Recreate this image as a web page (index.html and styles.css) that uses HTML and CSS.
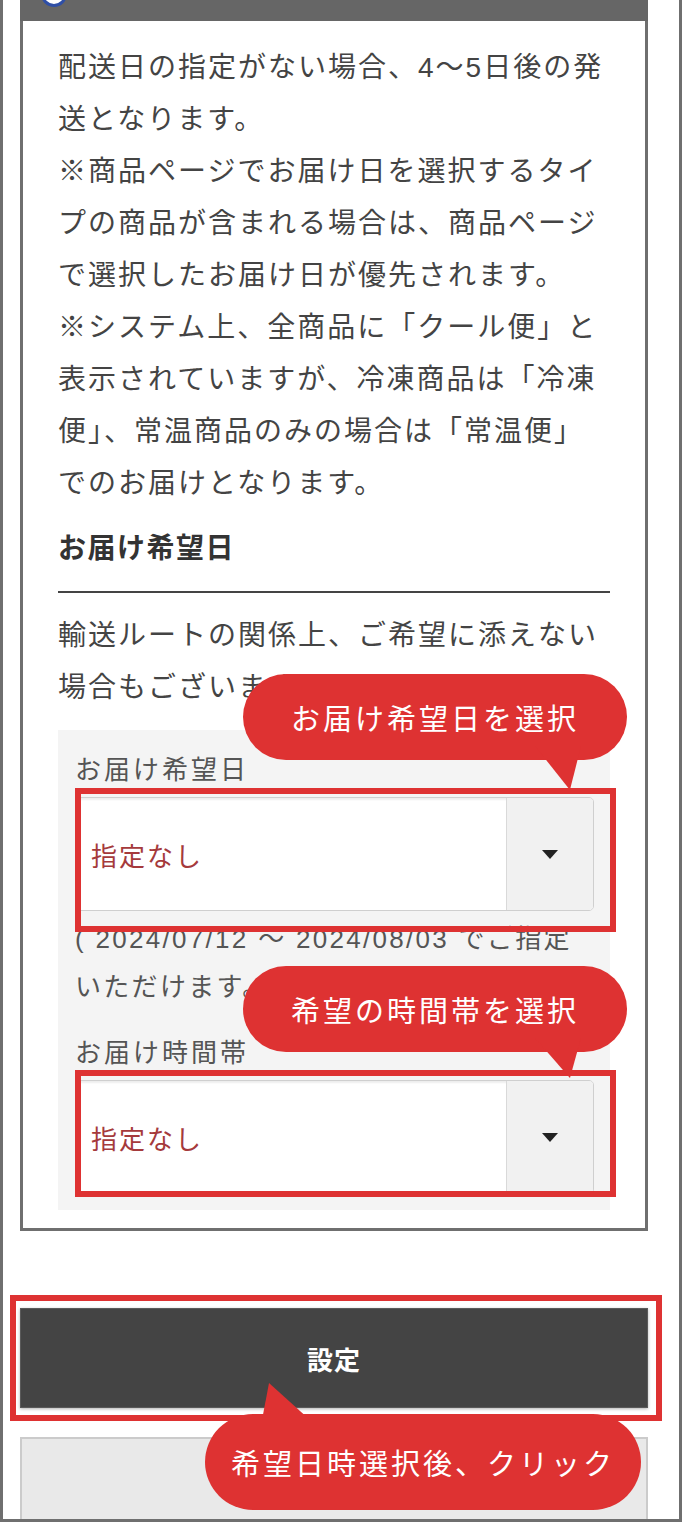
FILE: index.html
```html
<!DOCTYPE html>
<html>

<head>
    <title>お届け日時の指定</title>
    <link rel="stylesheet" href="styles.css">
</head>

<body>
    <div class="frame">
        <div class="panel">
            <div class="panel-head"><span class="head-icon"></span></div>
            <div class="panel-body">
                <p class="lead">配送日の指定がない場合、4〜5日後の発<br>送となります。<br>※商品ページでお届け日を選択するタイ<br>プの商品が含まれる場合は、商品ページ<br>で選択したお届け日が優先されます。<br>※システム上、全商品に「クール便」と<br>表示されていますが、冷凍商品は「冷凍<br>便」、常温商品のみの場合は「常温便」<br>でのお届けとなります。</p>

                <h2 class="section-title">お届け希望日</h2>
                <p class="note">輸送ルートの関係上、ご希望に添えない<br>場合もございます。</p>

                <div class="date-box">
                    <div class="field-label">お届け希望日</div>
                    <div class="select">
                        <span class="select-value">指定なし</span>
                        <span class="select-arrow"></span>
                    </div>
                    <p class="hint">( 2024/07/12 〜 2024/08/03 でご指定<br>いただけます。</p>

                    <div class="field-label second">お届け時間帯</div>
                    <div class="select">
                        <span class="select-value">指定なし</span>
                        <span class="select-arrow"></span>
                    </div>
                </div>
            </div>
        </div>

        <button class="btn-set">設定</button>
        <button class="btn-back"></button>

        <!-- annotation frames and callouts -->
        <div class="mark mark-date"></div>
        <div class="mark mark-time"></div>
        <div class="mark mark-set"></div>

        <div class="bubble bubble-date">お届け希望日を選択</div>
        <div class="bubble bubble-time">希望の時間帯を選択</div>
        <div class="bubble bubble-set">希望日時選択後、クリック</div>
    </div>
</body>

</html>
```

FILE: styles.css
```css
html,
body {
    margin: 0;
    padding: 0;
    background-color: #fff;
}

body {
    font-family: "Liberation Sans", "Noto Sans CJK JP", sans-serif;
    color: #444;
}

.frame {
    position: relative;
    width: 682px;
    height: 1522px;
    box-sizing: border-box;
    border: 3px solid #6f6f6f;
    border-top: none;
    overflow: hidden;
    background-color: #fff;
    padding-left: 17px;
}

/* panel */
.panel {
    width: 628px;
}

.panel-head {
    position: relative;
    height: 21px;
    background-color: #666;
    overflow: hidden;
}

.head-icon {
    position: absolute;
    left: 21px;
    top: -19px;
    width: 20px;
    height: 20px;
    border: 3px solid #2f4fa6;
    border-radius: 50%;
    background-color: #fff;
}

.panel-body {
    border: 3px solid #6f6f6f;
    border-top: none;
    padding: 21px 35px 18px 35px;
}

.lead {
    margin: 0;
    font-size: 28px;
    line-height: 52px;
    letter-spacing: 2px;
    white-space: nowrap;
}

.section-title {
    margin: 13px 0 0 0;
    padding-bottom: 16px;
    border-bottom: 2px solid #444;
    font-size: 28px;
    line-height: 52px;
    letter-spacing: 1.5px;
    font-weight: bold;
    color: #333;
}

.note {
    margin: 17px 0 0 0;
    font-size: 28px;
    line-height: 52px;
    letter-spacing: 2px;
    white-space: nowrap;
}

/* date / time selection */
.date-box {
    margin-top: 16px;
    background-color: #f4f4f4;
    padding: 20px 16px 16px 17px;
}

.field-label {
    font-size: 26px;
    line-height: 40px;
    letter-spacing: 3px;
    color: #555;
    margin-bottom: 7px;
}

.field-label.second {
    margin-top: 22px;
}

.select {
    display: flex;
    height: 114px;
    box-sizing: border-box;
    border: 1px solid #cfcfcf;
    border-radius: 5px;
    background-color: #fff;
    box-shadow: inset 0 2px 2px rgba(0, 0, 0, 0.07);
    overflow: hidden;
}

.select-value {
    flex: 1;
    display: flex;
    align-items: center;
    padding-left: 15px;
    font-size: 26px;
    letter-spacing: 2px;
    color: #a53a3c;
}

.select-arrow {
    width: 86px;
    display: flex;
    align-items: center;
    justify-content: center;
    background-color: #f1f1f1;
    border-left: 1px solid #d9d9d9;
}

.select-arrow::after {
    content: "";
    width: 0;
    height: 0;
    border-left: 8px solid transparent;
    border-right: 8px solid transparent;
    border-top: 9px solid #222;
}

.hint {
    margin: 4px 0 0 0;
    font-size: 26px;
    line-height: 48px;
    letter-spacing: 2.3px;
    color: #555;
    white-space: nowrap;
}

/* buttons */
.btn-set,
.btn-back {
    display: block;
    width: 628px;
    font-family: "Liberation Sans", "Noto Sans CJK JP", sans-serif;
}

.btn-set {
    margin-top: 77px;
    height: 100px;
    background-color: #444;
    border: 1px solid #5a5a5a;
    box-shadow: 0 1px 3px rgba(0, 0, 0, 0.3);
    color: #fff;
    font-size: 26px;
    font-weight: bold;
    letter-spacing: 1px;
}

.btn-back {
    margin-top: 29px;
    height: 110px;
    background-color: #e9e9e9;
    border: 2px solid #cbcbcb;
}

/* red annotation frames */
.mark {
    position: absolute;
    border: 6px solid #de3232;
    box-sizing: border-box;
}

.mark-date {
    left: 72px;
    top: 788px;
    width: 541px;
    height: 144px;
}

.mark-time {
    left: 72px;
    top: 1070px;
    width: 541px;
    height: 127px;
}

.mark-set {
    left: 7px;
    top: 1295px;
    width: 652px;
    height: 126px;
}

/* callouts */
.bubble {
    position: absolute;
    display: flex;
    align-items: center;
    justify-content: center;
    background-color: #de3232;
    color: #fff;
    font-size: 29px;
    letter-spacing: 3px;
    white-space: nowrap;
}

.bubble::after {
    content: "";
    position: absolute;
    background-color: #de3232;
}

.bubble-date,
.bubble-time {
    left: 240px;
    width: 384px;
    height: 86px;
    border-radius: 43px;
}

.bubble-date {
    top: 674px;
}

.bubble-time {
    top: 966px;
}

.bubble-date::after,
.bubble-time::after {
    left: 292px;
    top: 72px;
    width: 46px;
    height: 44px;
    clip-path: polygon(0 0, 100% 0, 76% 100%);
}

.bubble-time::after {
    height: 40px;
}

.bubble-set {
    left: 202px;
    top: 1414px;
    width: 436px;
    height: 96px;
    border-radius: 48px;
}

.bubble-set::after {
    left: 57px;
    top: -31px;
    width: 48px;
    height: 37px;
    clip-path: polygon(7px 0, 0 100%, 100% 100%);
}
```
